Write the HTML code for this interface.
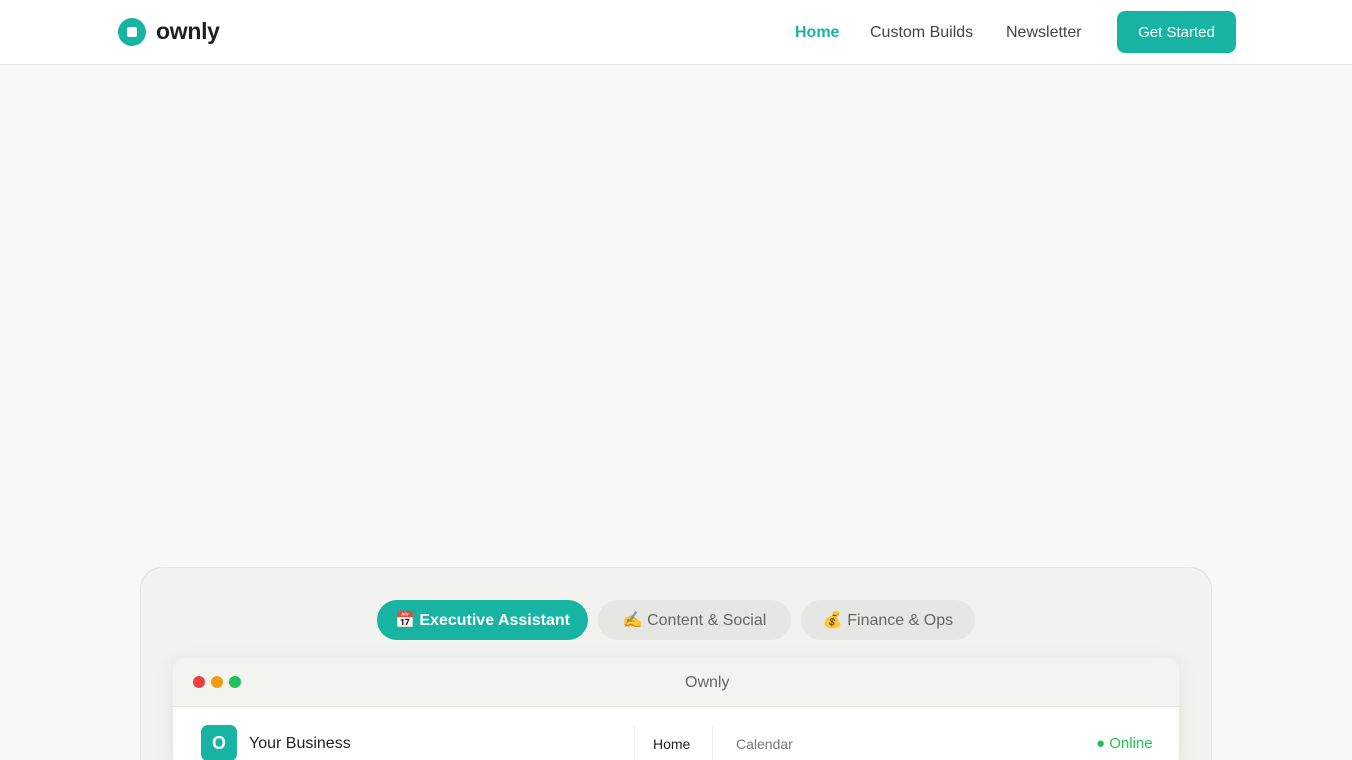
<!DOCTYPE html>
<html style="height:760px;overflow:hidden"><head><meta charset="utf-8"><style>
*{margin:0;padding:0;box-sizing:border-box}
body{width:1352px;height:760px;overflow:hidden;background:#f8f8f6;font-family:"Liberation Sans","Noto Sans CJK SC",sans-serif;position:relative}
.nav{position:absolute;top:0;left:0;width:1352px;height:65px;background:#fff;border-bottom:1px solid #e6e6e3}
.logo{position:absolute;left:118px;top:18px;width:28px;height:28px;border-radius:50%;background:#17b4a3}
.logo::after{content:"";position:absolute;left:9px;top:9px;width:10px;height:10px;background:#fff;border-radius:2px}
.brand{position:absolute;left:156px;top:18px;font-size:23px;font-weight:bold;color:#1f1f22;letter-spacing:-0.3px}
.nl{position:absolute;top:24px;font-size:16px;color:#444}
.btn{position:absolute;left:1117px;top:11px;width:119px;height:42px;border-radius:8px;background:#17b4a3;color:#fff;font-size:15px;text-align:center;line-height:44px}
.panel{position:absolute;left:140px;top:567px;width:1072px;height:193px;border:1px solid #e4e4df;border-bottom:none;border-radius:22px 22px 0 0;background:#f2f2ee}
.pill{position:absolute;top:600px;height:40px;border-radius:20px;font-size:16px;line-height:42px;text-align:center;background:#e6e6e2;color:#666}
.win{position:absolute;left:173px;top:658px;width:1006px;height:102px;border-radius:12px 12px 0 0;background:#fff;box-shadow:0 4px 20px rgba(0,0,0,.08);overflow:hidden}
.bar{height:49px;background:#f3f3f0;border-bottom:1px solid #e2e2de;position:relative}
.dot{position:absolute;top:18px;width:12px;height:12px;border-radius:50%}
</style></head><body>
<div class="nav">
<div class="logo"></div><div class="brand">ownly</div>
<div class="nl" style="left:795px;color:#17b4a3;font-weight:bold">Home</div>
<div class="nl" style="left:870px">Custom Builds</div>
<div class="nl" style="left:1006px">Newsletter</div>
<div class="btn">Get Started</div>
</div>
<div class="panel"></div>
<div class="pill" style="left:377px;width:211px;background:#17b4a3;color:#fff;font-weight:bold">📅 Executive Assistant</div>
<div class="pill" style="left:598px;width:193px">✍️ Content &amp; Social</div>
<div class="pill" style="left:801px;width:174px">💰 Finance &amp; Ops</div>
<div class="win">
<div class="bar">
<div class="dot" style="left:20px;background:#ea4040"></div>
<div class="dot" style="left:38px;background:#f29d0f"></div>
<div class="dot" style="left:56px;background:#22c05a"></div>
<div style="position:absolute;left:512px;top:16px;font-size:16px;color:#666">Ownly</div>
</div>
<div style="position:absolute;left:28px;top:67px;width:36px;height:36px;border-radius:7px;background:#17b4a3;color:#fff;font-weight:bold;font-size:18px;text-align:center;line-height:36px">O</div>
<div style="position:absolute;left:76px;top:77px;font-size:16px;color:#222">Your Business</div>
<div style="position:absolute;left:461px;top:68px;width:79px;height:52px;border-left:1px solid #eee;border-right:1px solid #eee"></div>
<div style="position:absolute;left:480px;top:78px;font-size:14px;color:#222">Home</div>
<div style="position:absolute;left:563px;top:78px;font-size:14px;color:#777">Calendar</div>
<div style="position:absolute;left:923px;top:77px;font-size:15px;color:#22c05a">● Online</div>
</div>
</body></html>
